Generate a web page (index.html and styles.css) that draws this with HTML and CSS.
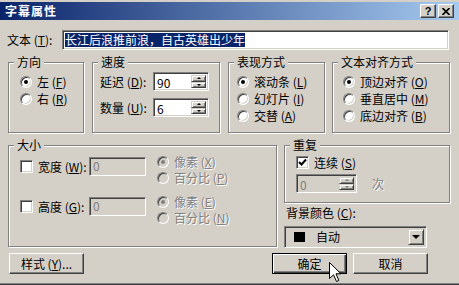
FILE: index.html
```html
<!DOCTYPE html>
<html lang="zh-CN">
<head>
    <meta charset="UTF-8">
    <title>字幕属性</title>
    <link rel="stylesheet" href="styles.css">
</head>
<body>
    <div class="dialog">
        <div class="titlebar">
            <span class="title">字幕属性</span>
            <div class="title-btns">
                <span class="tbtn help">?</span>
                <span class="tbtn">
                    <svg width="8" height="7" viewBox="0 0 8 7"><path d="M0.5 0 L7.5 7 M7.5 0 L0.5 7" stroke="#000" stroke-width="1.6"/></svg>
                </span>
            </div>
        </div>

        <div class="content">
            <!-- text row -->
            <div class="text-row">
                <span class="text-label">文本 (<u>T</u>):</span>
                <div class="field text-field"><span class="sel">长江后浪推前浪，自古英雄出少年</span></div>
            </div>

            <!-- top group boxes -->
            <div class="groups-row">
                <div class="group g-dir">
                    <span class="group-title">方向</span>
                    <div class="opt"><span class="radio on"></span>左 (<u>F</u>)</div>
                    <div class="opt"><span class="radio"></span>右 (<u>R</u>)</div>
                </div>
                <div class="group g-speed">
                    <span class="group-title">速度</span>
                    <div class="spin-row">
                        <span class="spin-label">延迟 (<u>D</u>):</span>
                        <div class="field spin">
                            <span class="spin-value">90</span>
                            <div class="spin-btns"><span class="sbtn"><i class="up"></i></span><span class="sbtn"><i class="down"></i></span></div>
                        </div>
                    </div>
                    <div class="spin-row">
                        <span class="spin-label">数量 (<u>U</u>):</span>
                        <div class="field spin">
                            <span class="spin-value">6</span>
                            <div class="spin-btns"><span class="sbtn"><i class="up"></i></span><span class="sbtn"><i class="down"></i></span></div>
                        </div>
                    </div>
                </div>
                <div class="group g-mode">
                    <span class="group-title">表现方式</span>
                    <div class="opt"><span class="radio on"></span>滚动条 (<u>L</u>)</div>
                    <div class="opt"><span class="radio"></span>幻灯片 (<u>I</u>)</div>
                    <div class="opt"><span class="radio"></span>交替 (<u>A</u>)</div>
                </div>
                <div class="group g-align">
                    <span class="group-title">文本对齐方式</span>
                    <div class="opt"><span class="radio on"></span>顶边对齐 (<u>O</u>)</div>
                    <div class="opt"><span class="radio"></span>垂直居中 (<u>M</u>)</div>
                    <div class="opt"><span class="radio"></span>底边对齐 (<u>B</u>)</div>
                </div>
            </div>

            <!-- size + repeat -->
            <div class="middle-row">
                <div class="group g-size">
                    <span class="group-title">大小</span>
                    <div class="size-row">
                        <div class="size-main">
                            <span class="check"></span>
                            <span class="size-label">宽度 (<u>W</u>):</span>
                            <div class="field dim-field disabled-field">0</div>
                        </div>
                        <div class="radio-col disabled">
                            <div class="opt"><span class="radio on"></span>像素 (<u>X</u>)</div>
                            <div class="opt"><span class="radio"></span>百分比 (<u>P</u>)</div>
                        </div>
                    </div>
                    <div class="size-row">
                        <div class="size-main">
                            <span class="check"></span>
                            <span class="size-label">高度 (<u>G</u>):</span>
                            <div class="field dim-field disabled-field">0</div>
                        </div>
                        <div class="radio-col disabled">
                            <div class="opt"><span class="radio on"></span>像素 (<u>E</u>)</div>
                            <div class="opt"><span class="radio"></span>百分比 (<u>N</u>)</div>
                        </div>
                    </div>
                </div>

                <div class="right-col">
                    <div class="group g-repeat">
                        <span class="group-title">重复</span>
                        <div class="check-row">
                            <span class="check">
                                <svg width="9" height="9" viewBox="0 0 9 9"><path d="M1 4 L3.5 6.5 L8 1.5" fill="none" stroke="#000" stroke-width="2"/></svg>
                            </span>
                            连续 (<u>S</u>)
                        </div>
                        <div class="repeat-spin-row">
                            <div class="field spin repeat-spin disabled-field">
                                <span class="spin-value">0</span>
                                <div class="spin-btns"><span class="sbtn"><i class="up gray"></i></span><span class="sbtn"><i class="down gray"></i></span></div>
                            </div>
                            <span class="times disabled">次</span>
                        </div>
                    </div>
                    <div class="bg-label">背景颜色 (<u>C</u>):</div>
                    <div class="field combo">
                        <span class="swatch"></span>
                        <span class="combo-text">自动</span>
                        <span class="combo-btn"><i class="down big"></i></span>
                    </div>
                </div>
            </div>

            <!-- buttons -->
            <div class="buttons-row">
                <button class="btn style-btn">样式 (<u>Y</u>)...</button>
                <button class="btn default ok-btn">确定</button>
                <button class="btn cancel-btn">取消</button>
            </div>
        </div>

        <!-- mouse pointer over the OK button -->
        <svg class="cursor" width="13" height="21" viewBox="0 0 13 21">
            <path d="M0.5 0.5 L0.5 16.5 L4.5 12.8 L7.5 19.5 L9.8 18.5 L7 11.8 L12 11.8 Z" fill="#fff" stroke="#000" stroke-width="1"/>
        </svg>
    </div>
</body>
</html>
```

FILE: styles.css
```css
/* Classic dialog styles */
body {
    margin: 0;
    background-color: #d4d0c8;
    font: 12px/14px "Noto Sans CJK SC", "Liberation Sans", sans-serif;
    color: #000;
}

u {
    text-decoration: underline;
}

.dialog {
    position: relative;
    width: 459px;
    height: 285px;
    box-sizing: border-box;
    padding-top: 2px;
    border-bottom: 1px solid #404040;
    box-shadow: inset 0 -1px #808080;
    overflow: hidden;
}

.titlebar {
    height: 18px;
    display: flex;
    align-items: center;
    justify-content: space-between;
    padding: 0 5px 0 5px;
    background: linear-gradient(to right, #0a246a, #a6caf0);
}

.title {
    color: white;
    font-weight: bold;
    letter-spacing: 1px;
}

.title-btns {
    display: flex;
    gap: 2px;
}

.tbtn {
    width: 16px;
    height: 14px;
    box-sizing: border-box;
    display: flex;
    align-items: center;
    justify-content: center;
    background-color: #d4d0c8;
    border: 1px solid;
    border-color: #fff #404040 #404040 #fff;
    box-shadow: inset -1px -1px #808080;
}

.tbtn.help {
    font: bold 11px/12px "Liberation Sans", sans-serif;
}

.content {
    padding: 10px 0 0 8px;
}

/* sunken field */
.field {
    box-sizing: border-box;
    background-color: #fff;
    border: 1px solid;
    border-color: #808080 #fff #fff #808080;
    box-shadow: inset 1px 1px #404040, inset -1px -1px #d4d0c8;
}

.text-row {
    display: flex;
    align-items: center;
}

.text-label {
    width: 55px;
    margin-left: -1px;
}

.text-field {
    width: 387px;
    height: 20px;
    padding: 2px 0 0 2px;
}

.sel {
    display: inline-block;
    background-color: #0a246a;
    color: white;
}

/* group boxes */
.groups-row {
    display: flex;
    margin-top: 12px;
}

.group {
    position: relative;
    box-sizing: border-box;
    border: 1px solid #808080;
    box-shadow: inset 1px 1px #fff, 1px 1px #fff;
}

.group-title {
    position: absolute;
    top: -8px;
    left: 5px;
    padding: 0 3px;
    background-color: #d4d0c8;
    white-space: nowrap;
}

.g-dir {
    width: 76px;
    height: 71px;
    padding: 10px 0 0 11px;
}

.g-speed {
    width: 128px;
    height: 71px;
    margin-left: 8px;
    padding: 9px 0 0 7px;
}

.g-mode {
    width: 97px;
    height: 71px;
    margin-left: 8px;
    padding: 10px 0 0 8px;
}

.g-align {
    width: 118px;
    height: 71px;
    margin-left: 7px;
    padding: 10px 0 0 10px;
}

.opt {
    display: flex;
    align-items: center;
    height: 17px;
    white-space: nowrap;
}

.radio {
    position: relative;
    flex: none;
    width: 12px;
    height: 12px;
    box-sizing: border-box;
    margin-right: 5px;
    border-radius: 50%;
    background-color: #fff;
    border: 1px solid;
    border-color: #808080 #fff #fff #808080;
    box-shadow: inset 1px 1px #404040, inset -1px -1px #d4d0c8;
}

.radio.on::after {
    content: "";
    position: absolute;
    left: 3px;
    top: 3px;
    width: 4px;
    height: 4px;
    border-radius: 50%;
    background-color: #000;
}

.disabled {
    color: #808080;
    text-shadow: 1px 1px #fff;
}

.disabled .radio {
    background-color: #d4d0c8;
}

.disabled .radio.on::after {
    background-color: #808080;
}

/* spin boxes */
.spin-row {
    display: flex;
    align-items: center;
    height: 19px;
}

.spin-row + .spin-row {
    margin-top: 7px;
}

.spin-label {
    width: 53px;
    white-space: nowrap;
}

.spin {
    display: flex;
    width: 56px;
    height: 19px;
    padding: 2px;
}

.spin-value {
    flex: 1;
    line-height: 15px;
    padding-left: 1px;
}

.spin-btns {
    width: 15px;
    display: flex;
    flex-direction: column;
}

.sbtn {
    flex: 1;
    display: flex;
    align-items: center;
    justify-content: center;
    box-sizing: border-box;
    background-color: #d4d0c8;
    border: 1px solid;
    border-color: #d4d0c8 #404040 #404040 #d4d0c8;
    box-shadow: inset 1px 1px #fff, inset -1px -1px #808080;
}

.up {
    width: 0;
    height: 0;
    border-left: 2px solid transparent;
    border-right: 2px solid transparent;
    border-bottom: 2px solid #000;
}

.down {
    width: 0;
    height: 0;
    border-left: 2px solid transparent;
    border-right: 2px solid transparent;
    border-top: 2px solid #000;
}

.up.gray {
    border-bottom-color: #808080;
}

.down.gray {
    border-top-color: #808080;
}

.down.big {
    border-left-width: 4px;
    border-right-width: 4px;
    border-top-width: 4px;
}

/* size + repeat */
.middle-row {
    display: flex;
    margin-top: 12px;
}

.g-size {
    width: 269px;
    height: 102px;
    padding: 8px 0 0 11px;
}

.size-row {
    display: flex;
    align-items: flex-start;
}

.size-row + .size-row {
    margin-top: 8px;
}

.size-main {
    display: flex;
    align-items: center;
    height: 19px;
    margin-top: 3px;
}

.check {
    flex: none;
    display: flex;
    align-items: center;
    justify-content: center;
    width: 13px;
    height: 13px;
    box-sizing: border-box;
    margin-right: 5px;
    background-color: #fff;
    border: 1px solid;
    border-color: #808080 #fff #fff #808080;
    box-shadow: inset 1px 1px #404040, inset -1px -1px #d4d0c8;
}

.size-label {
    width: 51px;
    white-space: nowrap;
}

.dim-field {
    width: 57px;
    height: 19px;
    padding: 1px 0 0 3px;
}

.disabled-field {
    background-color: #d4d0c8;
    color: #808080;
}

.radio-col {
    margin-left: 11px;
}

.radio-col .opt {
    height: 16px;
}

.right-col {
    width: 166px;
    margin-left: 7px;
}

.g-repeat {
    height: 58px;
    padding: 10px 0 0 11px;
}

.check-row {
    display: flex;
    align-items: center;
    height: 13px;
}

.repeat-spin-row {
    display: flex;
    align-items: center;
    margin-top: 5px;
}

.repeat-spin {
    width: 61px;
}

.times {
    margin-left: 15px;
}

.bg-label {
    margin-top: 3px;
    padding-left: 2px;
}

.combo {
    display: flex;
    align-items: center;
    width: 143px;
    height: 22px;
    margin-top: 6px;
    padding: 2px;
    background-color: #d4d0c8;
}

.swatch {
    width: 11px;
    height: 10px;
    margin-left: 7px;
    background-color: #000;
}

.combo-text {
    flex: 1;
    margin-left: 11px;
}

.combo-btn {
    align-self: stretch;
    width: 16px;
    display: flex;
    align-items: center;
    justify-content: center;
    box-sizing: border-box;
    border: 1px solid;
    border-color: #d4d0c8 #404040 #404040 #d4d0c8;
    box-shadow: inset 1px 1px #fff, inset -1px -1px #808080;
}

/* buttons */
.buttons-row {
    display: flex;
    margin-top: 5px;
}

.btn {
    width: 75px;
    height: 21px;
    padding: 0;
    font: inherit;
    color: #000;
    background-color: #d4d0c8;
    border: 1px solid;
    border-color: #fff #404040 #404040 #fff;
    box-shadow: inset -1px -1px #808080;
}

.btn.default {
    border-color: #000;
    box-shadow: inset 1px 1px #fff, inset -1px -1px #404040, inset -2px -2px #808080;
}

.style-btn {
    margin-left: 1px;
}

.ok-btn {
    margin-left: 188px;
}

.cancel-btn {
    margin-left: 6px;
}

.cursor {
    position: absolute;
    left: 329px;
    top: 262px;
}
```
